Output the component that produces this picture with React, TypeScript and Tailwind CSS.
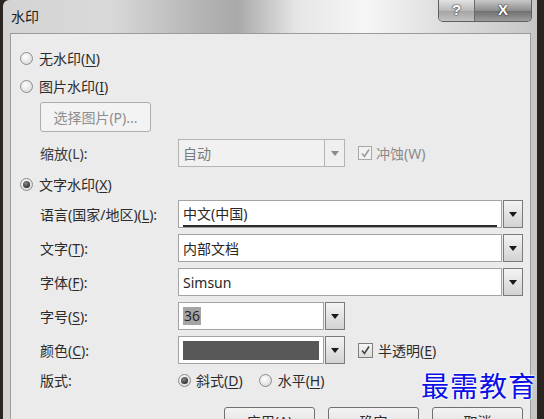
import React from "react";

const font = "font-['Noto_Sans','Noto_Sans_CJK_SC',sans-serif]";

function Radio({ checked }: { checked?: boolean }) {
  return (
    <span className="flex h-[13px] w-[13px] shrink-0 items-center justify-center rounded-full border border-[#8c8c8c] bg-[radial-gradient(circle_at_40%_35%,#ffffff_0%,#e4e4e4_60%,#c9c9c9_100%)]">
      {checked && (
        <span className="h-[7px] w-[7px] rounded-full bg-[radial-gradient(circle_at_40%_35%,#8a8a8a_0%,#333333_70%,#1f1f1f_100%)]" />
      )}
    </span>
  );
}

function Check({ disabled }: { disabled?: boolean }) {
  return (
    <span
      className={
        disabled
          ? "flex h-[14px] w-[14px] shrink-0 items-center justify-center border border-[#a8a8a8] bg-[#f2f2f2]"
          : "flex h-[15px] w-[15px] shrink-0 items-center justify-center border border-[#7e7e7e] bg-[linear-gradient(#f6f6f6,#dcdcdc)]"
      }
    >
      <svg width="11" height="11" viewBox="0 0 11 11">
        <path
          d="M2 5.5 L4.5 8.5 L9 1.5"
          fill="none"
          stroke={disabled ? "#9a9a9a" : "#444"}
          strokeWidth="1.6"
        />
      </svg>
    </span>
  );
}

function Arrow({ disabled }: { disabled?: boolean }) {
  return (
    <svg width="8" height="5" viewBox="0 0 8 5">
      <path d="M0 0 H8 L4 5 Z" fill={disabled ? "#8a8a8a" : "#1a1a1a"} />
    </svg>
  );
}

function Combo({
  wide,
  disabled,
  underline,
  children,
}: {
  wide?: boolean;
  disabled?: boolean;
  underline?: boolean;
  children?: React.ReactNode;
}) {
  return (
    <div className={wide ? "flex h-[28px] flex-1" : "flex h-[28px] w-[167px]"}>
      <div
        className={
          disabled
            ? "flex flex-1 items-center border border-[#b4b4b4] bg-[#f1f1f1] px-[4px] text-[#7a7a7a]"
            : "flex flex-1 items-center border border-[#a3a3a3] bg-white px-[4px] text-[#262626]"
        }
      >
        {underline ? (
          <div className="flex h-full w-full items-center border-b-[2px] border-[#2a2a2a] pt-[1px]">
            {children}
          </div>
        ) : (
          children
        )}
      </div>
      <div
        className={
          disabled
            ? "flex w-[20px] items-center justify-center border border-l-0 border-[#b4b4b4] bg-[#efefef]"
            : "ml-[1px] flex w-[20px] items-center justify-center border border-[#7a7a7a] bg-[linear-gradient(#f4f4f4,#d2d2d2)]"
        }
      >
        <Arrow disabled={disabled} />
      </div>
    </div>
  );
}

function Mn({ c }: { c: string }) {
  return (
    <>
      (<u className="underline-offset-2">{c}</u>)
    </>
  );
}

export default function App() {
  return (
    <div
      className={`relative h-[419px] w-[544px] overflow-hidden bg-[#2a2521] text-[14px] text-[#2b2b2b] ${font}`}
    >
      <div className="ml-[3px] flex h-full w-[534px] flex-col rounded-tl-[6px] bg-[linear-gradient(90deg,#d4d4d4_0%,#d9d9d9_20%,#b2b2b2_38%,#a9a9a9_44%,#e6e6e6_55%,#f6f6f6_68%,#dedede_82%,#c6c6c6_100%)]">
        {/* title bar */}
        <div className="flex h-[33px] shrink-0 items-start">
          <span className="ml-[8px] mt-[7px] text-[14px] leading-[20px] text-[#1e1e1e]">
            水印
          </span>
          <div className="ml-auto mr-[5px] flex h-[22px] overflow-hidden rounded-b-[5px] border border-t-0 border-[#5e5e5e]">
            <div className="flex w-[36px] items-center justify-center border-r border-[#6a6a6a] bg-[linear-gradient(#e2e2e2,#b9b9b9_50%,#a4a4a4_51%,#c2c2c2)] font-['Liberation_Sans',sans-serif] text-[15px] font-bold text-white [text-shadow:0_0_2px_#2a2a2a,0_0_1px_#2a2a2a]">
              ?
            </div>
            <div className="flex w-[56px] items-center justify-center bg-[linear-gradient(#c9c9c9,#8e8e8e_50%,#6e6e6e_51%,#9c9c9c)] font-['Liberation_Sans',sans-serif] text-[15px] font-bold text-white [text-shadow:0_0_2px_#222,0_0_1px_#222]">
              X
            </div>
          </div>
        </div>

        {/* body panel */}
        <div className="ml-[7px] mr-[6px] flex flex-1 flex-col border border-b-0 border-[#9b9b9b] bg-[#ebebeb] pr-[7px] pt-[10px]">
          <div className="flex h-[28px] items-center pl-[9px]">
            <Radio />
            <span className="ml-[6px]">
              无水印<Mn c="N" />
            </span>
          </div>
          <div className="flex h-[28px] items-center pl-[9px]">
            <Radio />
            <span className="ml-[6px]">
              图片水印<Mn c="I" />
            </span>
          </div>
          <div className="mt-[2px] flex h-[30px] pl-[29px]">
            <div className="flex w-[111px] items-center justify-center rounded-[3px] border border-[#adadad] bg-[#f3f3f3] text-[#8e8e8e]">
              选择图片(P)...
            </div>
          </div>
          <div className="mt-[7px] flex h-[28px] items-center pl-[29px]">
            <span className="w-[138px] text-[#3a3a3a]">缩放(L):</span>
            <Combo disabled>自动</Combo>
            <span className="ml-[13px]">
              <Check disabled />
            </span>
            <span className="ml-[4px] text-[#8a8a8a]">冲蚀(W)</span>
          </div>
          <div className="mt-[3px] flex h-[28px] items-center pl-[9px]">
            <Radio checked />
            <span className="ml-[6px]">
              文字水印<Mn c="X" />
            </span>
          </div>
          <div className="mt-[2px] flex h-[28px] items-center pl-[29px]">
            <span className="w-[138px]">
              语言(国家/地区)<Mn c="L" />:
            </span>
            <Combo wide underline>
              中文(中国)
            </Combo>
          </div>
          <div className="mt-[6px] flex h-[28px] items-center pl-[29px]">
            <span className="w-[138px]">
              文字<Mn c="T" />:
            </span>
            <Combo wide>内部文档</Combo>
          </div>
          <div className="mt-[6px] flex h-[28px] items-center pl-[29px]">
            <span className="w-[138px]">
              字体<Mn c="F" />:
            </span>
            <Combo wide>Simsun</Combo>
          </div>
          <div className="mt-[6px] flex h-[28px] items-center pl-[29px]">
            <span className="w-[138px]">
              字号<Mn c="S" />:
            </span>
            <Combo>
              <span className="bg-[#a5a5a5] px-[1px] leading-[18px]">36</span>
            </Combo>
          </div>
          <div className="mt-[6px] flex h-[28px] items-center pl-[29px]">
            <span className="w-[138px]">
              颜色<Mn c="C" />:
            </span>
            <Combo>
              <div className="h-[19px] w-full bg-[#585858]" />
            </Combo>
            <span className="ml-[13px]">
              <Check />
            </span>
            <span className="ml-[5px]">
              半透明<Mn c="E" />
            </span>
          </div>
          <div className="mt-[2px] flex h-[28px] items-center pl-[29px]">
            <span className="w-[138px]">版式:</span>
            <Radio checked />
            <span className="ml-[5px]">
              斜式<Mn c="D" />
            </span>
            <span className="ml-[16px]">
              <Radio />
            </span>
            <span className="ml-[6px]">
              水平<Mn c="H" />
            </span>
          </div>
          <div className="mt-[13px] flex h-[26px] justify-end gap-[13px]">
            <div className="flex w-[91px] items-start justify-center rounded-[3px] border border-[#707070] bg-[linear-gradient(#f3f3f3,#dddddd)] pt-[3px]">
              应用(A)
            </div>
            <div className="flex w-[91px] items-start justify-center rounded-[3px] border border-[#707070] bg-[linear-gradient(#f3f3f3,#dddddd)] pt-[3px]">
              确定
            </div>
            <div className="flex w-[91px] items-start justify-center rounded-[3px] border border-[#707070] bg-[linear-gradient(#f3f3f3,#dddddd)] pt-[3px]">
              取消
            </div>
          </div>
        </div>
      </div>

      {/* site watermark overlay */}
      <div className="absolute left-[421px] top-[367px] text-[28px] leading-[36px] tracking-[1px] text-[#0c10e6] [text-shadow:0_0_2px_#fff,0_0_2px_#fff,0_0_3px_#fff] font-['Noto_Sans_CJK_SC',sans-serif]">
        最需教育
      </div>
    </div>
  );
}
